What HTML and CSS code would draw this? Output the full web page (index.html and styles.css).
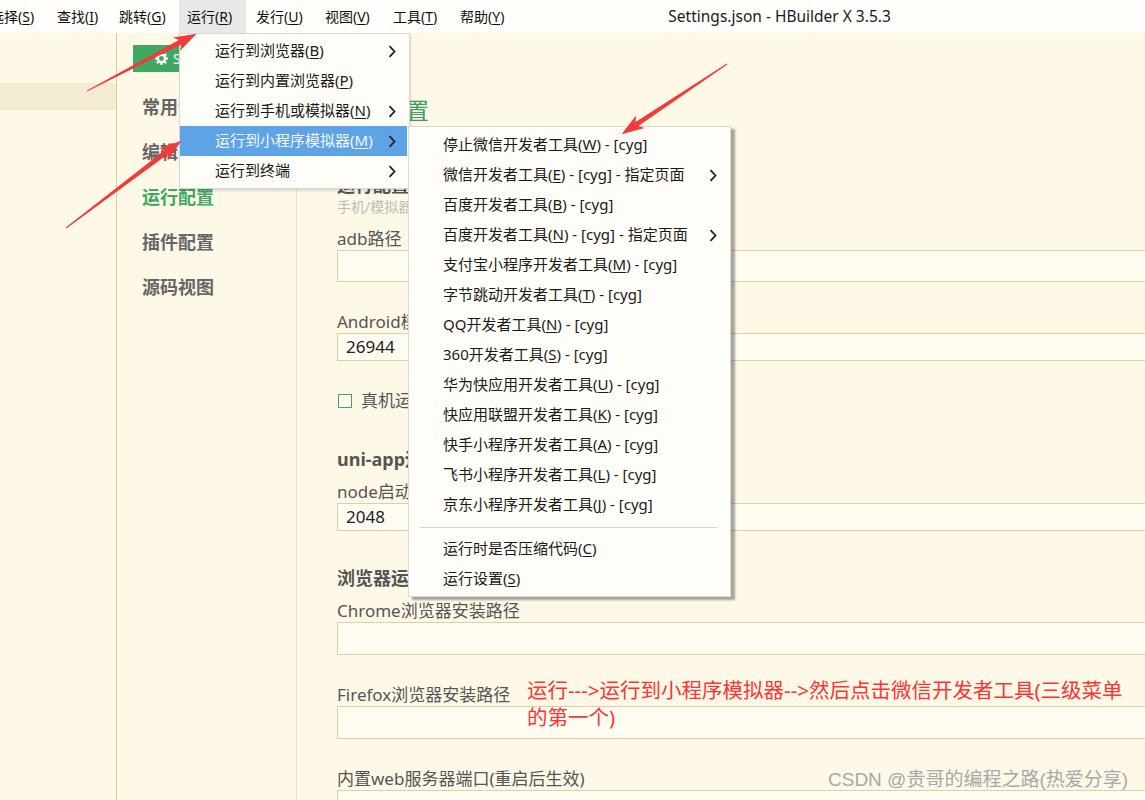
FILE: index.html
```html
<!DOCTYPE html>
<html lang="zh-CN">
<head>
<meta charset="utf-8">
<title>Settings.json - HBuilder X 3.5.3</title>
<link rel="stylesheet" href="styles.css">
</head>
<body>
<div class="app">
  <header class="menubar">
    <span class="mi first">选择(<u>S</u>)</span>
    <span class="mi w62">查找(<u>I</u>)</span>
    <span class="mi w68">跳转(<u>G</u>)</span>
    <span class="mi active">运行(<u>R</u>)</span>
    <span class="mi w69">发行(<u>U</u>)</span>
    <span class="mi w68">视图(<u>V</u>)</span>
    <span class="mi w67">工具(<u>T</u>)</span>
    <span class="mi">帮助(<u>Y</u>)</span>
    <span class="wintitle">Settings.json - HBuilder X 3.5.3</span>
  </header>

  <div class="main">
    <aside class="side"><div class="side-sel"></div></aside>

    <nav class="nav">
      <div class="btn">
        <svg class="gear" width="13" height="13" viewBox="0 0 16 16"><path fill="#fff" d="M6.8 0h2.4l.4 2.2 1.3.6 1.9-1.3 1.7 1.7-1.3 1.9.6 1.3 2.2.4v2.4l-2.2.4-.6 1.3 1.3 1.9-1.7 1.7-1.9-1.3-1.3.6-.4 2.2H6.8l-.4-2.2-1.3-.6-1.9 1.3-1.7-1.7 1.3-1.9-.6-1.3L0 9.2V6.8l2.2-.4.6-1.3-1.3-1.9 1.7-1.7 1.9 1.3 1.3-.6zM8 5a3 3 0 100 6 3 3 0 000-6z"/></svg>
        <span>Settings.json</span>
      </div>
      <div class="nav-item">常用设置</div>
      <div class="nav-item">编辑器配置</div>
      <div class="nav-item on">运行配置</div>
      <div class="nav-item">插件配置</div>
      <div class="nav-item">源码视图</div>
    </nav>

    <section class="content">
      <div class="title">运行配置</div>
      <div class="heading h-first">运行配置</div>
      <div class="sub">手机/模拟器运行配置</div>
      <div class="label l-first">adb路径</div>
      <div class="input tall"></div>
      <div class="label">Android模拟器端口</div>
      <div class="input">26944</div>
      <div class="check-row"><span class="box"></span>真机运行时每次都安装基座</div>
      <div class="heading">uni-app运行配置</div>
      <div class="label l-tight">node启动内存(MB)</div>
      <div class="input">2048</div>
      <div class="heading">浏览器运行配置</div>
      <div class="label l-tight">Chrome浏览器安装路径</div>
      <div class="input taller"></div>
      <div class="label">Firefox浏览器安装路径</div>
      <div class="input taller"></div>
      <div class="label">内置web服务器端口(重启后生效)</div>
      <div class="input taller"></div>
    </section>
  </div>

  <div class="menu menu-run">
    <div class="item"><span>运行到浏览器(<u>B</u>)</span><svg class="chev" width="8" height="13" viewBox="0 0 8 13"><path d="M1.5 1.2L6.5 6.5 1.5 11.8"/></svg></div>
    <div class="item"><span>运行到内置浏览器(<u>P</u>)</span></div>
    <div class="item"><span>运行到手机或模拟器(<u>N</u>)</span><svg class="chev" width="8" height="13" viewBox="0 0 8 13"><path d="M1.5 1.2L6.5 6.5 1.5 11.8"/></svg></div>
    <div class="item hl"><span>运行到小程序模拟器(<u>M</u>)</span><svg class="chev" width="8" height="13" viewBox="0 0 8 13"><path d="M1.5 1.2L6.5 6.5 1.5 11.8"/></svg></div>
    <div class="item"><span>运行到终端</span><svg class="chev" width="8" height="13" viewBox="0 0 8 13"><path d="M1.5 1.2L6.5 6.5 1.5 11.8"/></svg></div>
  </div>

  <div class="menu menu-sub">
    <div class="item"><span>停止微信开发者工具(<u>W</u>) - [cyg]</span></div>
    <div class="item"><span>微信开发者工具(<u>E</u>) - [cyg] - 指定页面</span><svg class="chev" width="8" height="13" viewBox="0 0 8 13"><path d="M1.5 1.2L6.5 6.5 1.5 11.8"/></svg></div>
    <div class="item"><span>百度开发者工具(<u>B</u>) - [cyg]</span></div>
    <div class="item"><span>百度开发者工具(<u>N</u>) - [cyg] - 指定页面</span><svg class="chev" width="8" height="13" viewBox="0 0 8 13"><path d="M1.5 1.2L6.5 6.5 1.5 11.8"/></svg></div>
    <div class="item"><span>支付宝小程序开发者工具(<u>M</u>) - [cyg]</span></div>
    <div class="item"><span>字节跳动开发者工具(<u>T</u>) - [cyg]</span></div>
    <div class="item"><span>QQ开发者工具(<u>N</u>) - [cyg]</span></div>
    <div class="item"><span>360开发者工具(<u>S</u>) - [cyg]</span></div>
    <div class="item"><span>华为快应用开发者工具(<u>U</u>) - [cyg]</span></div>
    <div class="item"><span>快应用联盟开发者工具(<u>K</u>) - [cyg]</span></div>
    <div class="item"><span>快手小程序开发者工具(<u>A</u>) - [cyg]</span></div>
    <div class="item"><span>飞书小程序开发者工具(<u>L</u>) - [cyg]</span></div>
    <div class="item"><span>京东小程序开发者工具(<u>J</u>) - [cyg]</span></div>
    <div class="sep"></div>
    <div class="item"><span>运行时是否压缩代码(<u>C</u>)</span></div>
    <div class="item"><span>运行设置(<u>S</u>)</span></div>
  </div>

  <svg class="arrows" width="1145" height="800" viewBox="0 0 1145 800">
    <polygon points="87,91.6 181.3,44.6 179.9,51 196.5,33.8 172.9,37.6 178.9,40.1 87,90.4"/>
    <polygon points="66.3,228.4 168.2,154 167.9,160.3 181.5,140.7 158.9,148.4 165.2,149.8 65.7,227.6"/>
    <polygon points="727.3,64.5 638.4,126.1 644.6,128 621.5,134.3 636,115.6 635.6,121.9 726.7,63.5"/>
  </svg>

  <div class="note">运行---&gt;运行到小程序模拟器--&gt;然后点击微信开发者工具(三级菜单<br>的第一个)</div>
  <div class="watermark">CSDN @贵哥的编程之路(热爱分享)</div>
</div>
</body>
</html>
```

FILE: styles.css
```css
* { box-sizing: border-box; }

html, body {
  margin: 0;
  padding: 0;
  background: #fef8e7;
}

body {
  font-family: "Noto Sans", "Noto Sans CJK SC", sans-serif;
  color: #1a1a1a;
}

u { text-decoration: underline; text-underline-offset: 2px; text-decoration-thickness: 1px; }

.app {
  position: relative;
  width: 1145px;
  height: 800px;
  overflow: hidden;
  background: #fef8e7;
}

/* menubar */
.menubar {
  display: flex;
  align-items: stretch;
  height: 33px;
  background: #fffefa;
  font-size: 14px;
  line-height: 33px;
  white-space: nowrap;
}
.mi {
  flex: none;
  padding-left: 8px;
  color: #111;
}
.mi.first { margin-left: -18px; width: 67px; }
.mi.w62 { width: 62px; }
.mi.w67 { width: 67px; }
.mi.w68 { width: 68px; }
.mi.w69 { width: 69px; }
.mi.active { background: #e8e8e6; width: 67px; margin-right: 2px; }
.wintitle {
  margin-left: 164px;
  font-size: 15.5px;
  color: #1a1a1a;
}

/* main */
.main {
  display: flex;
  height: 767px;
}

.side {
  width: 117px;
  flex: none;
  border-right: 1px solid #dccb98;
  padding-top: 50px;
}
.side-sel {
  height: 27px;
  background: #f3ebd2;
}

.nav {
  width: 180px;
  flex: none;
  border-right: 1px solid #efe4c6;
  padding-top: 12px;
}
.btn {
  margin-left: 16px;
  width: 140px;
  height: 27px;
  background: #3fa964;
  color: #fff;
  font-size: 14px;
  display: flex;
  align-items: center;
  gap: 5px;
  padding-left: 22px;
  margin-bottom: 13px;
}
.nav-item {
  padding-left: 25px;
  height: 45px;
  line-height: 45px;
  font-size: 18px;
  font-weight: 700;
  color: #666;
}
.nav-item.on { color: #3fa964; }

.content {
  flex: 1;
  padding-left: 40px;
  padding-top: 62px;
  overflow: hidden;
  color: #555;
}
.title {
  font-size: 23px;
  line-height: 30px;
  color: #3b9f5c;
}
.heading {
  font-size: 18px;
  font-weight: 700;
  line-height: 24px;
  margin-top: 35px;
  color: #555;
  white-space: nowrap;
}
.heading.h-first { margin-top: 48px; }
.sub {
  font-size: 14px;
  line-height: 18px;
  margin-top: 1px;
  color: #bbb;
}
.label {
  font-size: 17px;
  line-height: 22px;
  margin-top: 29px;
  color: #555;
  white-space: nowrap;
}
.label.l-first { margin-top: 12px; }
.label.l-tight { margin-top: 10px; }

.input {
  width: 830px;
  height: 28px;
  background: #fffcf2;
  border: 1px solid #ddd0a6;
  font-size: 17px;
  line-height: 26px;
  padding-left: 8px;
  color: #222;
}
.input.tall { height: 32px; }
.input.taller { height: 33px; }

.check-row {
  margin-top: 29px;
  display: flex;
  align-items: center;
  font-size: 17px;
  line-height: 22px;
  color: #555;
  white-space: nowrap;
}
.box {
  width: 14px;
  height: 14px;
  border: 1px solid #3fa964;
  background: #fffcf2;
  margin-left: 1px;
  margin-right: 9px;
}

/* popup menus */
.menu {
  position: absolute;
  background: #fffdf7;
  border: 1px solid #d8d8d8;
  font-size: 15px;
  color: #1a1a1a;
  white-space: nowrap;
}
.menu .item {
  height: 30px;
  display: flex;
  align-items: center;
  justify-content: space-between;
}
.menu .item span { padding-bottom: 3px; }
.menu .item.hl {
  background: #5ea3e6;
  color: #f2f7fd;
}
.chev path { fill: none; stroke: #222; stroke-width: 1.8; }

.menu-run {
  left: 179px;
  top: 33px;
  width: 231px;
  padding: 2px 2px 2px 0;
  box-shadow: 1px 2px 2px rgba(0,0,0,0.12);
}
.menu-run .item { padding: 0 11px 0 35px; }

.menu-sub {
  left: 408px;
  top: 126px;
  width: 323px;
  padding: 3px 0 2px 0;
  box-shadow: 4px 3px 2px rgba(60,60,50,0.45);
}
.menu-sub .item { padding: 0 13px 0 34px; }
.menu-sub .sep {
  height: 1px;
  background: #d6d6d6;
  margin: 7px 13px 6px 11px;
}

/* annotations */
.arrows {
  position: absolute;
  left: 0;
  top: 0;
  pointer-events: none;
}
.arrows polygon { fill: #f23a3a; }

.note {
  position: absolute;
  left: 527px;
  top: 677px;
  font-size: 20.5px;
  line-height: 27px;
  color: #ff3333;
  white-space: nowrap;
}
.watermark {
  position: absolute;
  left: 828px;
  top: 767px;
  font-family: "Liberation Sans", "Noto Sans CJK SC", sans-serif;
  font-size: 19px;
  line-height: 26px;
  color: #a8a8a8;
  white-space: nowrap;
}
```
